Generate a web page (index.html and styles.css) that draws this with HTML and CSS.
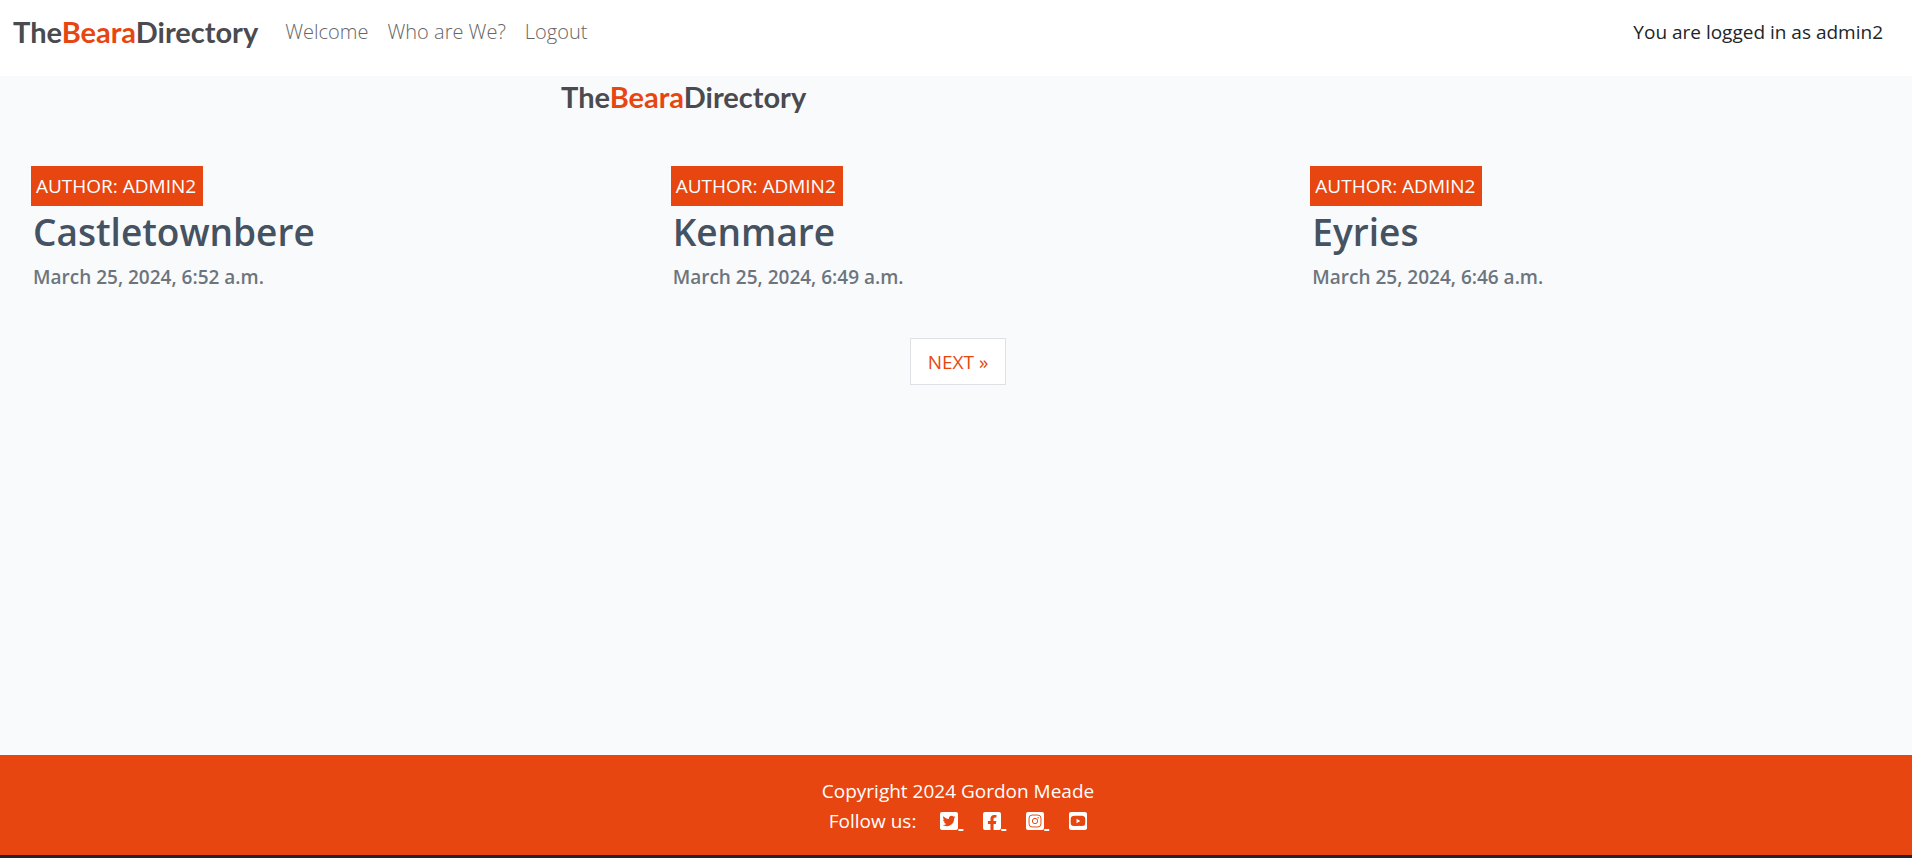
FILE: index.html
```html
<!DOCTYPE html>
<html lang="en">
<head>
<meta charset="utf-8">
<meta name="viewport" content="width=device-width, initial-scale=1">
<title>The Beara Directory</title>
<link rel="stylesheet" href="styles.css">
</head>
<body>
<header class="navbar">
  <a class="brand" href="#">The<span class="accent">Beara</span>Directory</a>
  <nav class="nav">
    <a href="#">Welcome</a>
    <a href="#">Who are We?</a>
    <a href="#">Logout</a>
  </nav>
  <p class="status">You are logged in as admin2</p>
</header>
<main class="main">
  <div class="masthead"><span class="brand">The<span class="accent">Beara</span>Directory</span></div>
  <div class="posts">
    <article class="post">
      <p class="author">Author: admin2</p>
      <a class="post-link" href="#"><h2 class="title">Castletownbere</h2><p class="date">March 25, 2024, 6:52 a.m.</p></a>
    </article>
    <article class="post">
      <p class="author">Author: admin2</p>
      <a class="post-link" href="#"><h2 class="title">Kenmare</h2><p class="date">March 25, 2024, 6:49 a.m.</p></a>
    </article>
    <article class="post">
      <p class="author">Author: admin2</p>
      <a class="post-link" href="#"><h2 class="title">Eyries</h2><p class="date">March 25, 2024, 6:46 a.m.</p></a>
    </article>
  </div>
  <nav class="pagination" aria-label="Page navigation"><a class="page-link" href="#">NEXT »</a></nav>
</main>
<footer class="footer">
  <p>Copyright 2024 Gordon Meade</p>
  <div class="follow">
    <span class="follow-label">Follow us:</span>
    <a href="#" aria-label="Twitter"><svg class="icon" viewBox="0 32 448 448"><path d="M400 32H48C21.5 32 0 53.5 0 80v352c0 26.5 21.5 48 48 48h352c26.5 0 48-21.5 48-48V80c0-26.5-21.5-48-48-48zm-48.9 158.8c.2 2.8.2 5.7.2 8.5 0 86.7-66 186.6-186.6 186.6-37.2 0-71.7-10.8-100.7-29.4 5.3.6 10.4.8 15.8.8 30.7 0 58.9-10.4 81.4-28-28.8-.6-53-19.5-61.3-45.5 10.1 1.5 19.2 1.5 29.6-1.2-30-6.1-52.5-32.5-52.5-64.4v-.8c8.7 4.9 18.9 7.9 29.6 8.3a65.447 65.447 0 0 1-29.2-54.6c0-12.2 3.2-23.4 8.9-33.1 32.3 39.8 80.8 65.8 135.2 68.6-9.3-44.5 24-80.6 64-80.6 18.9 0 35.9 7.9 47.9 20.7 14.8-2.8 29-8.3 41.6-15.8-4.9 15.2-15.2 28-28.8 36.1 13.2-1.4 26-5.1 37.8-10.2-8.9 13.1-20.1 24.7-32.9 34z"/></svg>&nbsp;</a>
    <a href="#" aria-label="Facebook"><svg class="icon" viewBox="0 32 448 448"><path d="M400 32H48A48 48 0 0 0 0 80v352a48 48 0 0 0 48 48h137.25V327.69h-63V256h63v-54.64c0-62.15 37-96.48 93.67-96.48 27.14 0 55.52 4.84 55.52 4.84v61h-31.27c-30.81 0-40.42 19.12-40.42 38.73V256h68.78l-11 71.69h-57.78V480H400a48 48 0 0 0 48-48V80a48 48 0 0 0-48-48z"/></svg>&nbsp;</a>
    <a href="#" aria-label="Instagram"><svg class="icon" viewBox="0 32 448 448"><rect y="32" width="448" height="448" rx="48"/><rect class="line" x="76" y="108" width="296" height="296" rx="76"/><circle class="line" cx="224" cy="256" r="66"/><circle class="dot" cx="303" cy="177" r="18"/></svg>&nbsp;</a>
    <a href="#" aria-label="YouTube"><svg class="icon" viewBox="0 32 448 448"><path d="M186.8 202.1l95.2 54.1-95.2 54.1V202.1zM448 80v352c0 26.5-21.5 48-48 48H48c-26.5 0-48-21.5-48-48V80c0-26.5 21.5-48 48-48h352c26.5 0 48 21.5 48 48zm-42 176.3s0-59.6-7.6-88.2c-4.2-15.8-16.5-28.2-32.2-32.4C337.9 128 224 128 224 128s-113.9 0-142.2 7.7c-15.7 4.2-28 16.6-32.2 32.4-7.6 28.5-7.6 88.2-7.6 88.2s0 59.6 7.6 88.2c4.2 15.8 16.5 27.7 32.2 31.9C110.1 384 224 384 224 384s113.9 0 142.2-7.7c15.7-4.2 28-16.1 32.2-31.9 7.6-28.5 7.6-88.1 7.6-88.1z"/></svg></a>
  </div>
</footer>
</body>
</html>
```
FILE: styles.css
```css
* { box-sizing: border-box; }
body {
  margin: 0;
  min-height: 100vh;
  display: flex;
  flex-direction: column;
  background: #f9fafc;
  color: #212529;
  font: 19px/30px "Open Sans", "Noto Sans", sans-serif;
}
p, h2 { margin: 0; }
a { color: inherit; text-decoration: none; }
.navbar {
  display: flex;
  align-items: center;
  padding: 8px 29px 20px 13px;
  background: #fff;
}
.brand {
  color: #4a4a4f;
  font: 700 29px/48px Lato, sans-serif;
}
.accent { color: #e84610; }
.nav {
  display: flex;
  gap: 19px;
  margin-left: 27px;
  color: #666;
  font-size: 20px;
  font-weight: 300;
}
.status { margin-left: auto; }
.main {
  flex: 1;
  overflow: hidden;
}
.masthead {
  display: flex;
  padding: 0 0 48px 561px;
}
.masthead .brand { line-height: 42px; }
.posts {
  display: grid;
  grid-template-columns: repeat(3, 1fr);
  margin-right: -38px;
  padding-left: 31px;
}
.author {
  width: fit-content;
  padding: 5px 7px 5px 5px;
  background: #e84610;
  color: #fff;
  text-transform: uppercase;
}
.post-link { display: block; padding: 0 2px; }
.title {
  color: #445261;
  font-size: 37px;
  line-height: 52px;
  font-weight: 600;
}
.date {
  margin-top: 4px;
  color: #6c757d;
  font-weight: 600;
}
.pagination {
  display: flex;
  justify-content: center;
  padding: 46px 0 0 4px;
}
.page-link {
  padding: 8px 17px 7px;
  border: 1px solid #dee2e6;
  background: #fff;
  color: #e84610;
}
.footer {
  padding: 21px 0 19px 4px;
  background: #e84610;
  border-bottom: 3px solid #212529;
  color: #fff;
  text-align: center;
}
.follow {
  display: flex;
  justify-content: center;
  gap: 20px;
}
.follow-label { margin-right: 4px; }
.follow a {
  text-decoration: underline;
  text-decoration-thickness: 2px;
}
.icon {
  width: 18px;
  height: 18px;
  fill: currentColor;
  vertical-align: -2px;
}
.line { fill: none; stroke: #e84610; stroke-width: 24; }
.dot { fill: #e84610; }
```
